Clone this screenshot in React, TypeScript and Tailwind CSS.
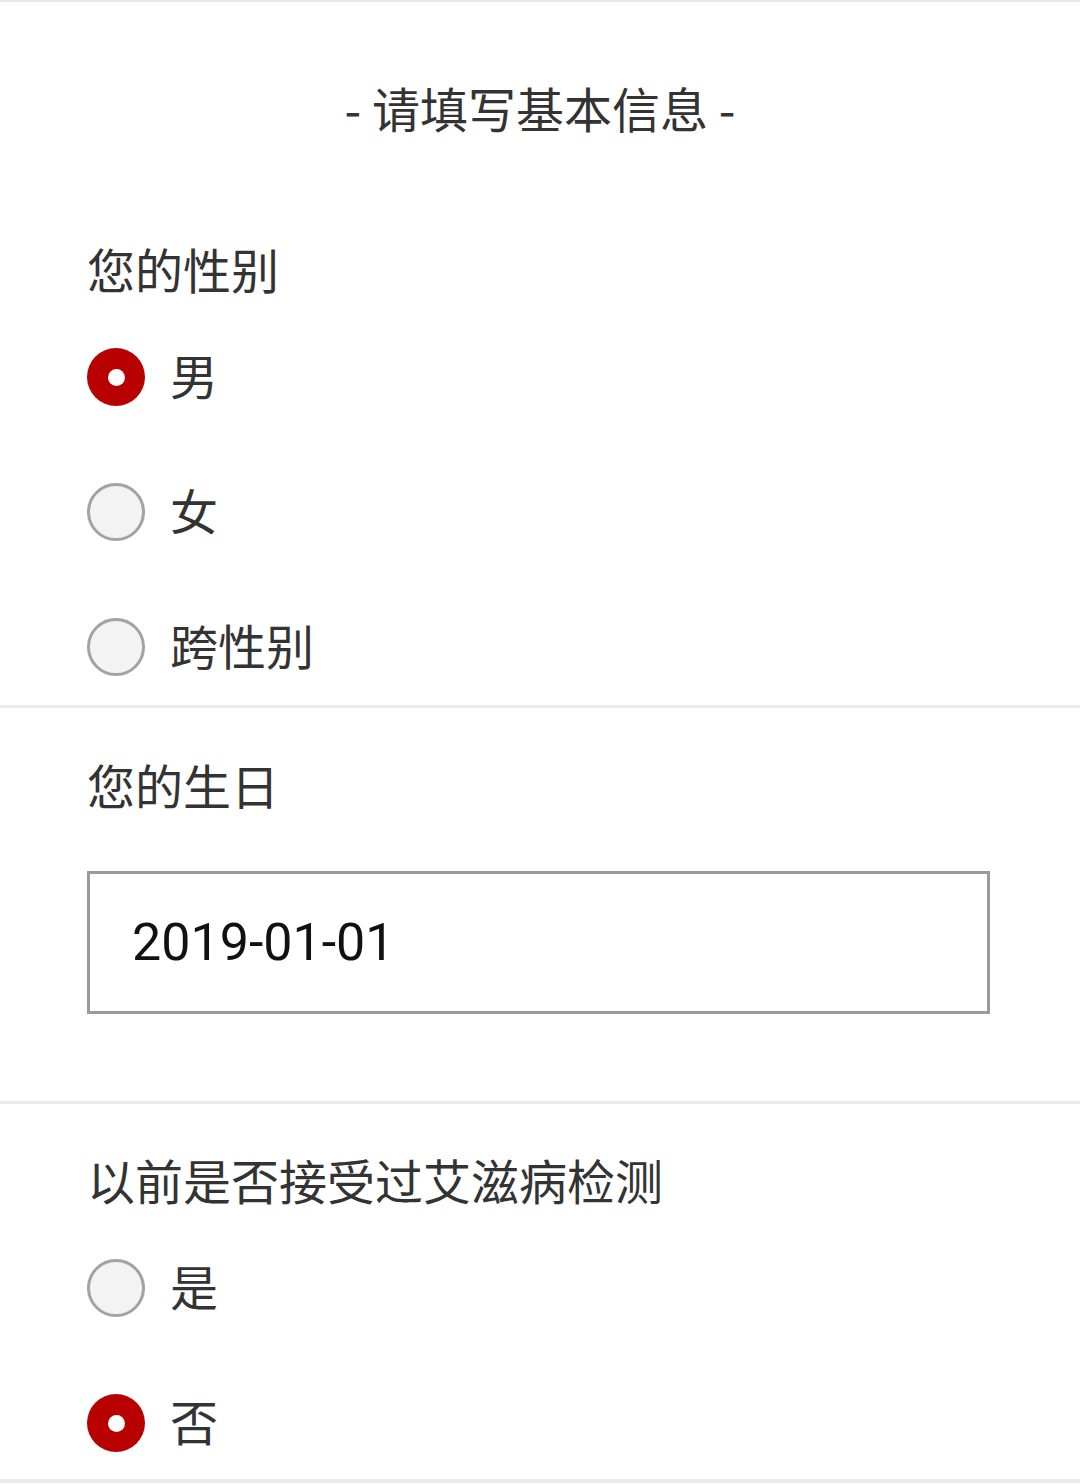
import { useState } from 'react';

const CJK = { fontFamily: '"Noto Sans CJK SC", "Noto Sans", sans-serif' };

// radio row, checked = red ring with white dot
function Radio({ label, checked, onClick }: { label: string; checked: boolean; onClick: () => void }) {
  return (
    <button type="button" onClick={onClick} className="flex items-center h-[58px] text-left">
      {checked ? (
        <span className="w-[58px] h-[58px] rounded-full bg-[#b80000] flex items-center justify-center shrink-0">
          <span className="w-[17px] h-[17px] rounded-full bg-white" />
        </span>
      ) : (
        <span className="w-[58px] h-[58px] rounded-full bg-[#f3f3f3] border-[3px] border-[#a3a3a3] shrink-0" />
      )}
      <span className="ml-[25px] pb-[6px] text-[48px] leading-[60px] text-[#333]">{label}</span>
    </button>
  );
}

export default function App() {
  const [gender, setGender] = useState('男');
  const [tested, setTested] = useState('否');

  return (
    <div className="w-[1080px] h-[1484px] bg-white overflow-hidden" style={CJK}>
      {/* section 1 */}
      <div className="border-t-2 border-[#e6e6e6] pl-[87px] pb-[29px]">
        <div className="mt-[75px] h-[60px] text-center text-[48px] leading-[60px] text-[#333] -ml-[87px]">
          - 请填写基本信息 -
        </div>
        <div className="mt-[101px] h-[60px] text-[48px] leading-[60px] text-[#333]">您的性别</div>
        <div className="mt-[50px] flex flex-col gap-[77px]">
          {['男', '女', '跨性别'].map(g => (
            <Radio key={g} label={g} checked={gender === g} onClick={() => setGender(g)} />
          ))}
        </div>
      </div>

      {/* section 2 */}
      <div className="border-t-[3px] border-[#ebebeb] pl-[87px] pb-[87px]">
        <div className="mt-[46px] h-[60px] text-[48px] leading-[60px] text-[#333]">您的生日</div>
        <div className="mt-[57px] w-[903px] h-[143px] border-[3px] border-[#9a9a9a] flex items-center pl-[42px]">
          <span className="text-[52px] text-[#111]" style={{ fontFamily: 'Roboto, "Noto Sans", sans-serif' }}>
            2019-01-01
          </span>
        </div>
      </div>

      {/* section 3 */}
      <div className="border-t-[3px] border-[#ebebeb] pl-[87px] pb-[27px]">
        <div className="mt-[45px] h-[60px] text-[48px] leading-[60px] text-[#333]">以前是否接受过艾滋病检测</div>
        <div className="mt-[50px] flex flex-col gap-[77px]">
          {['是', '否'].map(t => (
            <Radio key={t} label={t} checked={tested === t} onClick={() => setTested(t)} />
          ))}
        </div>
      </div>
      <div className="border-t-4 border-[#ebebeb]" />
    </div>
  );
}
